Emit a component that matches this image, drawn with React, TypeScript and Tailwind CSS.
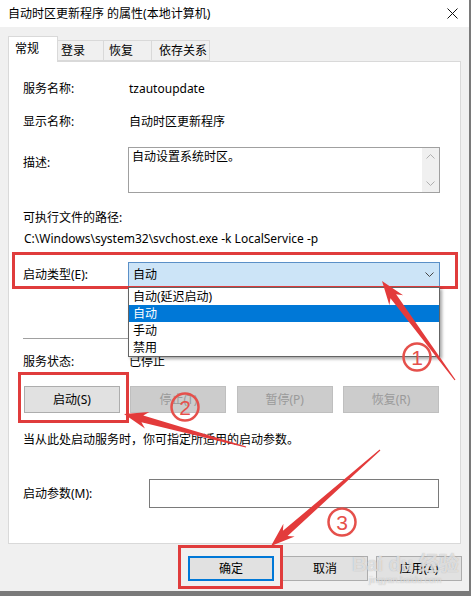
import type { ReactNode } from 'react';

const RED = '#e33b3b';

type Pt = [number, number];

// tapered annotation arrow: thin tail, dart head at the tip
function Arrow({ tip, tail, head = 24, headW = 17, shaft = 7 }: { tip: Pt; tail: Pt; head?: number; headW?: number; shaft?: number }) {
  const dx = tip[0] - tail[0];
  const dy = tip[1] - tail[1];
  const len = Math.hypot(dx, dy);
  const ux = dx / len;
  const uy = dy / len;
  const px = -uy;
  const py = ux;
  const bx = tip[0] - ux * head;
  const by = tip[1] - uy * head;
  const nx = tip[0] - ux * (head - 5);
  const ny = tip[1] - uy * (head - 5);
  const pts: Pt[] = [
    [tail[0] + px * 0.6, tail[1] + py * 0.6],
    [nx + px * shaft / 2, ny + py * shaft / 2],
    [bx + px * headW / 2, by + py * headW / 2],
    tip,
    [bx - px * headW / 2, by - py * headW / 2],
    [nx - px * shaft / 2, ny - py * shaft / 2],
    [tail[0] - px * 0.6, tail[1] - py * 0.6],
  ];
  return <polygon points={pts.map((p) => p.join(',')).join(' ')} fill={RED} />;
}

function Step({ x, y, n }: { x: number; y: number; n: string }) {
  return (
    <g>
      <circle cx={x} cy={y} r={13.5} fill="none" stroke="#e5504b" strokeWidth={2.5} />
      <text x={x} y={y + 7.5} textAnchor="middle" fontSize={21} fill="#e5504b" fontFamily="Liberation Sans, sans-serif">{n}</text>
    </g>
  );
}

function Btn({ children, disabled, primary, w = 'w-[96px]', h = 'h-[27px]' }: { children: ReactNode; disabled?: boolean; primary?: boolean; w?: string; h?: string }) {
  let cls = 'bg-[#e1e1e1] border border-[#adadad] text-black';
  if (disabled) cls = 'bg-[#cccccc] border border-[#bfbfbf] text-[#9a9a9a]';
  if (primary) cls = 'bg-[#e1e1e1] border-2 border-[#0078d7] text-black';
  return <div className={`${w} ${h} ${cls} flex items-center justify-center`}>{children}</div>;
}

function Chevron({ up, className }: { up?: boolean; className?: string }) {
  return (
    <svg width="9" height="5" viewBox="0 0 9 5" className={className}>
      <path d={up ? 'M0.5 4.5 L4.5 0.5 L8.5 4.5' : 'M0.5 0.5 L4.5 4.5 L8.5 0.5'} fill="none" stroke="currentColor" strokeWidth="1" />
    </svg>
  );
}

export default function App() {
  return (
    <div className="w-[471px] h-[596px] bg-[#7a7a7a] relative overflow-hidden text-[12px] leading-4 text-black font-['Noto_Sans','Noto_Sans_CJK_SC',sans-serif]">
      <div className="w-[469px] h-[591px] bg-[#f0f0f0] flex flex-col">
        {/* title bar */}
        <div className="h-[27px] bg-white flex items-center justify-between pl-2 pr-[11px] shrink-0">
          <span className="text-[12px]">自动时区更新程序 的属性(本地计算机)</span>
          <svg width="11" height="11" viewBox="0 0 11 11">
            <path d="M0.5 0.5 L10.5 10.5 M10.5 0.5 L0.5 10.5" stroke="#111" strokeWidth="1" />
          </svg>
        </div>

        {/* tabs */}
        <div className="mt-[9px] ml-2 flex items-end h-[25px] relative z-10">
          <div className="w-[50px] h-[26px] -mb-px bg-white border border-b-0 border-[#d9d9d9] pl-[6px] pt-[4px]">常规</div>
          <div className="w-[46px] h-[21px] border border-l-0 border-[#d9d9d9] pl-[3px] pt-[2px]">登录</div>
          <div className="w-[48px] h-[21px] border border-l-0 border-[#d9d9d9] pl-[5px] pt-[2px]">恢复</div>
          <div className="w-[58px] h-[21px] border border-l-0 border-[#d9d9d9] pl-[7px] pt-[2px]">依存关系</div>
        </div>

        {/* general page */}
        <div className="ml-2 w-[453px] h-[483px] bg-white border border-[#d9d9d9] pl-[14px] flex flex-col shrink-0">
          <div className="mt-[19px] flex items-center">
            <span className="w-[106px]">服务名称:</span>
            <span>tzautoupdate</span>
          </div>
          <div className="mt-[17px] flex items-center">
            <span className="w-[106px]">显示名称:</span>
            <span>自动时区更新程序</span>
          </div>
          <div className="mt-[17px] flex items-start">
            <span className="w-[105px] pt-[8px]">描述:</span>
            <div className="w-[312px] h-[46px] border border-[#a0a0a0] flex">
              <div className="flex-1 pl-[3px] pt-[1px]">自动设置系统时区。</div>
              <div className="w-[17px] bg-[#f0f0f0] flex flex-col items-center justify-between py-[6px] text-[#b0b0b0]">
                <Chevron up />
                <Chevron />
              </div>
            </div>
          </div>
          <div className="mt-[17px]">可执行文件的路径:</div>
          <div className="mt-[5px] pl-px">C:\Windows\system32\svchost.exe -k LocalService -p</div>

          <div className="mt-[15px] flex items-center h-[25px]">
            <span className="w-[105px]">启动类型(E):</span>
            <div className="relative w-[312px] h-[25px] bg-[#cce4f7] border border-[#5a8fc7] flex items-center justify-between pl-[4px] pr-[5px]">
              <span>自动</span>
              <Chevron className="text-[#444]" />
              <div className="absolute left-[-1px] top-[24px] w-[312px] bg-white border border-[#646464] shadow-[2px_2px_3px_rgba(0,0,0,0.35)] z-20 flex flex-col">
                <div className="h-[17px] pl-[4px] flex items-center">自动(延迟启动)</div>
                <div className="h-[17px] pl-[4px] flex items-center bg-[#0078d7] text-white">自动</div>
                <div className="h-[17px] pl-[4px] flex items-center">手动</div>
                <div className="h-[17px] pl-[4px] flex items-center">禁用</div>
              </div>
            </div>
          </div>

          <div className="mt-[51px] h-px w-[417px] bg-[#a0a0a0]" />

          <div className="mt-[15px] flex items-center">
            <span className="w-[106px]">服务状态:</span>
            <span>已停止</span>
          </div>

          <div className="mt-[16px] ml-px w-[415px] flex justify-between">
            <Btn>启动(S)</Btn>
            <Btn disabled>停止(T)</Btn>
            <Btn disabled>暂停(P)</Btn>
            <Btn disabled>恢复(R)</Btn>
          </div>

          <div className="mt-[19px]">当从此处启动服务时，你可指定所适用的启动参数。</div>

          <div className="mt-[31px] flex items-center h-[29px]">
            <span className="w-[126px]">启动参数(M):</span>
            <div className="w-[290px] h-[29px] border border-[#7a7a7a] bg-white" />
          </div>
        </div>

        {/* dialog buttons */}
        <div className="mt-[12px] ml-[188px] flex gap-[8px]">
          <Btn primary w="w-[86px]" h="h-[25px]">确定</Btn>
          <Btn w="w-[86px]" h="h-[25px]">取消</Btn>
          <Btn w="w-[86px]" h="h-[25px]">应用(A)</Btn>
        </div>
      </div>

      {/* watermark */}
      <div className="absolute left-[352px] top-[553px] flex flex-col items-center pointer-events-none text-[rgba(255,255,255,0.6)] [text-shadow:0_0_1px_rgba(140,140,140,0.7)]">
        <span className="text-[20px] leading-[22px] font-bold font-['Liberation_Sans','Noto_Sans_CJK_SC',sans-serif]">Bai du 经验</span>
        <span className="text-[9px] leading-[10px] font-['Liberation_Sans',sans-serif]">jingyan.baidu.com</span>
      </div>

      {/* red annotation boxes */}
      <div className="absolute left-[12px] top-[252px] w-[446px] h-[37px] border-[3px] border-[#e03c3c] pointer-events-none" />
      <div className="absolute left-[18px] top-[372px] w-[111px] h-[51px] border-[3px] border-[#e03c3c] pointer-events-none" />
      <div className="absolute left-[178px] top-[545px] w-[105px] h-[44px] border-[3px] border-[#e03c3c] pointer-events-none" />

      {/* arrows and step numbers */}
      <svg className="absolute inset-0 pointer-events-none z-30" width="471" height="596">
        <Arrow tip={[382, 281]} tail={[455, 380]} />
        <Arrow tip={[124, 414]} tail={[246, 447]} />
        <Arrow tip={[271, 546]} tail={[380, 450]} />
        <Step x={417} y={357} n="1" />
        <Step x={185} y={407} n="2" />
        <Step x={342} y={522} n="3" />
      </svg>
    </div>
  );
}
